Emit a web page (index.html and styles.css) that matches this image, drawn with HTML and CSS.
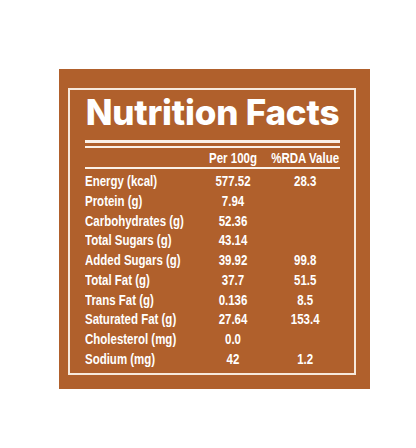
FILE: index.html
```html
<!DOCTYPE html>
<html lang="en">
<head>
    <meta charset="UTF-8">
    <meta name="viewport" content="width=device-width, initial-scale=1.0">
    <title>Nutrition Facts</title>
    <link rel="stylesheet" href="styles.css">
</head>
<body>
    <div class="card">
        <div class="frame">
            <h1 class="title">Nutrition Facts</h1>
            <div class="double-rule"></div>
            <div class="head-wrap">
                <div class="facts head">
                    <span></span>
                    <span class="num">Per 100g</span>
                    <span class="num">%RDA Value</span>
                </div>
            </div>
            <div class="facts rows">
                <div class="row"><span>Energy (kcal)</span><span class="num">577.52</span><span class="num">28.3</span></div>
                <div class="row"><span>Protein (g)</span><span class="num">7.94</span><span class="num"></span></div>
                <div class="row"><span>Carbohydrates (g)</span><span class="num">52.36</span><span class="num"></span></div>
                <div class="row"><span>Total Sugars (g)</span><span class="num">43.14</span><span class="num"></span></div>
                <div class="row"><span>Added Sugars (g)</span><span class="num">39.92</span><span class="num">99.8</span></div>
                <div class="row"><span>Total Fat (g)</span><span class="num">37.7</span><span class="num">51.5</span></div>
                <div class="row"><span>Trans Fat (g)</span><span class="num">0.136</span><span class="num">8.5</span></div>
                <div class="row"><span>Saturated Fat (g)</span><span class="num">27.64</span><span class="num">153.4</span></div>
                <div class="row"><span>Cholesterol (mg)</span><span class="num">0.0</span><span class="num"></span></div>
                <div class="row"><span>Sodium (mg)</span><span class="num">42</span><span class="num">1.2</span></div>
            </div>
        </div>
    </div>
</body>
</html>
```

FILE: styles.css
```css
body,*{margin: 0;padding: 0;box-sizing: border-box;}
body{background: #fff;}
.card{
    width: 311px;
    height: 320px;
    margin: 69px 0 0 59px;
    background-color: #b0602c;
    padding: 19px 14px 14px 9px;
}
.frame{
    height: 100%;
    border: 2px solid #f7e9dc;
    padding: 2px 14px 0 15px;
    color: #fff;
}
.title{
    font-family: Inter, "Open Sans", sans-serif;
    font-weight: 800;
    font-size: 35px;
    line-height: 40px;
    letter-spacing: -0.2px;
    white-space: nowrap;
    text-align: center;
}
.double-rule{
    margin-top: 8px;
    height: 8px;
    border-top: 3px solid #fbf1e8;
    border-bottom: 2px solid #fbf1e8;
}
/* narrow bold look: Liberation Sans squeezed to ~82% */
.facts{
    width: 311px;
    font-family: "Liberation Sans", Arial, sans-serif;
    font-weight: bold;
    font-size: 14px;
    white-space: nowrap;
    transform: scaleX(0.82);
    transform-origin: left top;
}
.head,.row{
    display: grid;
    grid-template-columns: 135px 91px 85px;
}
.head-wrap{
    margin-top: 1px;
    border-bottom: 2px solid #fbf1e8;
}
.head{line-height: 18px;}
.rows{padding-top: 3px;}
.row{line-height: 19.75px;}
.num{text-align: center;}
```
